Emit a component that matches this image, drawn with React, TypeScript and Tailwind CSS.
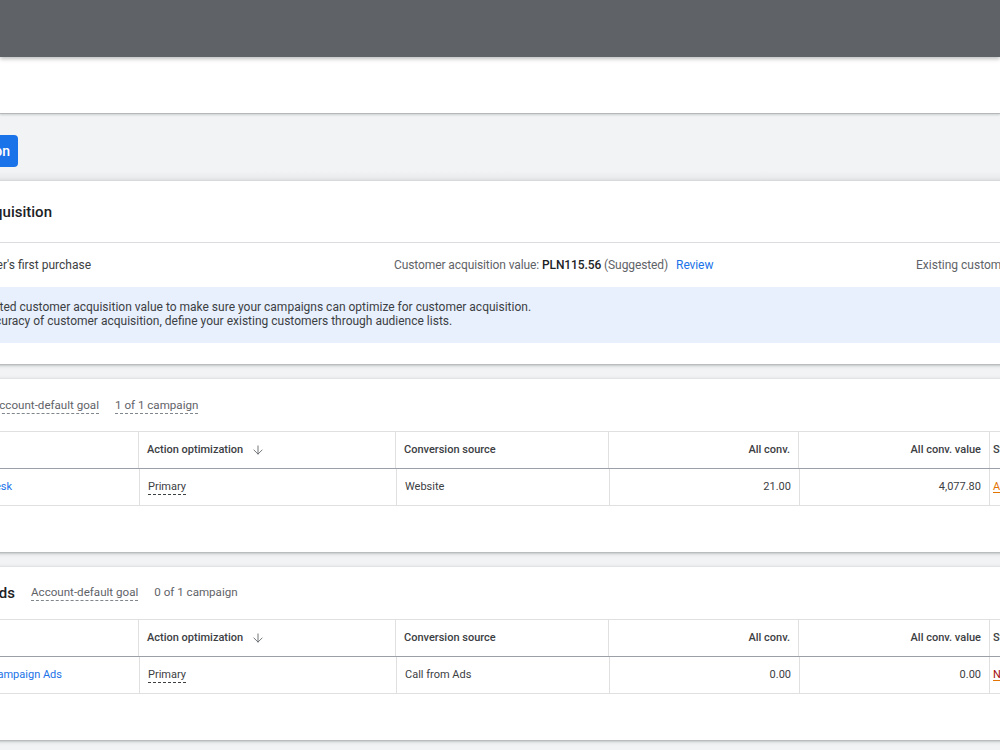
import { ArrowDown } from 'lucide-react';

interface RowProps {
  name: string;
  nameEnd: string;
  source: string;
  allConv: string;
  allValue: string;
  status: string;
  statusColor: string;
}

// table with conversion actions, first column starts off-screen
const ConversionTable = ({ name, nameEnd, source, allConv, allValue, status, statusColor }: RowProps) => {
  return (
    <div className="flex flex-col">
      {/* Header */}
      <div className="flex h-[37px] border-t border-[#e0e0e0] text-[11px] font-medium text-[#3c4043]">
        <div className="w-[139px] shrink-0 border-r border-[#e0e0e0]" />
        <div className="w-[257px] shrink-0 border-r border-[#e0e0e0] flex items-center gap-2 px-2">
          <span>Action optimization</span>
          <ArrowDown className="w-3.5 h-3.5 text-[#5f6368]" strokeWidth={1.5} />
        </div>
        <div className="w-[213px] shrink-0 border-r border-[#e0e0e0] flex items-center px-2">Conversion source</div>
        <div className="w-[190px] shrink-0 border-r border-[#e0e0e0] flex items-center justify-end px-2">All conv.</div>
        <div className="w-[191px] shrink-0 border-r border-[#e0e0e0] flex items-center justify-end px-2">All conv. value</div>
        <div className="w-[120px] shrink-0 flex items-center px-[3px]">Status</div>
      </div>

      {/* Row */}
      <div className="flex h-[38px] border-t border-b border-t-[#9aa0a6] border-b-[#e0e0e0] text-[11px] text-[#3c4043]">
        <div className="w-[140px] shrink-0 border-r border-[#e0e0e0] flex items-center">
          <div className={`${nameEnd} flex justify-end whitespace-nowrap text-[#1a73e8]`}>{name}</div>
        </div>
        <div className="w-[257px] shrink-0 border-r border-[#e0e0e0] flex items-center px-2">
          <span className="border-b border-dashed border-[#3c4043] leading-[14px]">Primary</span>
        </div>
        <div className="w-[213px] shrink-0 border-r border-[#e0e0e0] flex items-center px-2">{source}</div>
        <div className="w-[190px] shrink-0 border-r border-[#e0e0e0] flex items-center justify-end px-2">{allConv}</div>
        <div className="w-[190px] shrink-0 border-r border-[#e0e0e0] flex items-center justify-end px-2">{allValue}</div>
        <div className="w-[160px] shrink-0 flex items-center px-[3px] whitespace-nowrap">
          <span className={`${statusColor} underline decoration-[#e37400] underline-offset-2`}>{status}</span>
        </div>
      </div>
    </div>
  );
};

export default function App() {
  return (
    <div className="w-[1000px] h-[750px] overflow-hidden bg-[#f1f3f4] font-['Roboto','Liberation_Sans',sans-serif]">
      {/* dimmed top bar */}
      <div className="relative z-20 h-[57px] bg-[#5f6368] shadow-[0_2px_4px_rgba(0,0,0,0.25)]" />

      {/* white toolbar */}
      <div className="relative z-10 h-[57px] bg-white border-b border-[#b4b7bb] shadow-[0_1px_2px_rgba(60,64,67,0.2)]" />

      {/* action bar */}
      <div className="h-[67px] pt-[21px] bg-gradient-to-b from-[#f1f3f4] from-85% to-[#e6e8ea]">
        <div className="w-[18px] flex justify-end">
          <button className="h-[32px] shrink-0 whitespace-nowrap rounded-[4px] bg-[#1a73e8] pl-4 pr-2 text-[14px] font-medium text-white">
            + New conversion action
          </button>
        </div>
      </div>

      <div className="flex flex-col gap-[15px]">
        {/* Customer acquisition */}
        <div className="-mx-[20px] bg-white shadow-[0_1px_2px_rgba(60,64,67,0.3),0_1px_4px_1px_rgba(60,64,67,0.15)]">
          <div className="px-[20px]">
            <div className="h-[62px] flex items-center border-b border-[#dadce0]">
              <div className="w-[52px] flex justify-end whitespace-nowrap pt-[2px] text-[15px] font-medium text-[#202124]">
                Customer acquisition
              </div>
            </div>
            <div className="h-[44px] flex items-center text-[12px] text-[#5f6368] whitespace-nowrap">
              <div className="w-[394px] shrink-0">
                <div className="w-[91px] flex justify-end text-[#3c4043]">New customer's first purchase</div>
              </div>
              <div className="w-[522px] shrink-0 flex items-center tracking-[-0.1px]">
                <span>Customer acquisition value:&nbsp;</span>
                <span className="font-medium text-[#202124]">PLN115.56</span>
                <span>&nbsp;(Suggested)</span>
                <span className="ml-2 text-[#1a73e8]">Review</span>
              </div>
              <div className="shrink-0">Existing customer lists: None</div>
            </div>
            <div className="h-[56px] bg-[#e8f0fe] pt-[13px] text-[12px] leading-[14px] text-[#3c4043] whitespace-nowrap">
              <div className="-ml-[100px]">
                <p>Review the suggested customer acquisition value to make sure your campaigns can optimize for customer acquisition.</p>
                <p>To improve the accuracy of customer acquisition, define your existing customers through audience lists.</p>
              </div>
            </div>
            <div className="h-[21px]" />
          </div>
        </div>

        {/* Purchases */}
        <div className="-mx-[20px] bg-white shadow-[0_1px_2px_rgba(60,64,67,0.3),0_1px_4px_1px_rgba(60,64,67,0.15)]">
          <div className="px-[20px] pb-[46px]">
            <div className="h-[52px] flex items-center pt-[2px] text-[11.6px] text-[#5f6368] whitespace-nowrap">
              <div className="w-[99px] flex justify-end items-center gap-4">
                <span className="text-[15px] font-medium text-[#202124]">Purchase</span>
                <span className="border-b border-dashed border-[#80868b] leading-[15px]">Account-default goal</span>
              </div>
              <span className="ml-4 border-b border-dashed border-[#80868b] leading-[15px]">1 of 1 campaign</span>
            </div>
            <ConversionTable
              name="Purchase desk"
              nameEnd="w-[12px]"
              source="Website"
              allConv="21.00"
              allValue="4,077.80"
              status="Active"
              statusColor="text-[#e37400]"
            />
          </div>
        </div>

        {/* Calls from Ads */}
        <div className="-mx-[20px] bg-white shadow-[0_1px_2px_rgba(60,64,67,0.3),0_1px_4px_1px_rgba(60,64,67,0.15)]">
          <div className="px-[20px] pb-[46px]">
            <div className="h-[52px] flex items-center text-[11.6px] text-[#5f6368] whitespace-nowrap">
              <div className="w-[15px] flex justify-end">
                <span className="text-[15px] font-medium text-[#202124]">Phone call leads from Ads</span>
              </div>
              <span className="ml-4 border-b border-dashed border-[#80868b] leading-[15px]">Account-default goal</span>
              <span className="ml-4">0 of 1 campaign</span>
            </div>
            <ConversionTable
              name="Calls from Campaign Ads"
              nameEnd="w-[62px]"
              source="Call from Ads"
              allConv="0.00"
              allValue="0.00"
              status="No recent conversions"
              statusColor="text-[#a50e0e]"
            />
          </div>
        </div>
      </div>
    </div>
  );
}
